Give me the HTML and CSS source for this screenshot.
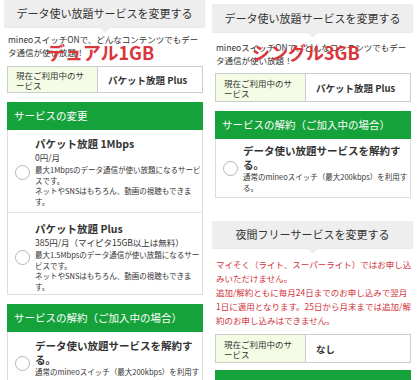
FILE: index.html
```html
<!DOCTYPE html>
<html lang="ja">

<head>
    <meta charset="utf-8">
    <meta name="viewport" content="width=device-width, initial-scale=1.0">
    <title>データ使い放題サービス</title>
    <link rel="stylesheet" href="styles.css">
</head>

<body>
    <div class="screens">

        <!-- venstre: dual -->
        <section class="pane pane-dual">
            <p class="stamp">デュアル1GB</p>
            <h2 class="balloon">データ使い放題サービスを変更する</h2>
            <p class="lead">mineoスイッチONで、どんなコンテンツでもデー<br>タ通信が使い放題！</p>
            <table class="current">
                <tr>
                    <th>現在ご利用中のサービス</th>
                    <td>パケット放題 Plus</td>
                </tr>
            </table>

            <div class="box">
                <h3 class="box-title">サービスの変更</h3>
                <div class="option">
                    <span class="radio"></span>
                    <div class="option-text">
                        <p class="option-name">パケット放題 1Mbps</p>
                        <p class="price">0円/月</p>
                        <p class="note">最大1Mbpsのデータ通信が使い放題になるサービ<br>スです。<br>ネットやSNSはもちろん、動画の視聴もできま<br>す。</p>
                    </div>
                </div>
                <div class="option">
                    <span class="radio"></span>
                    <div class="option-text">
                        <p class="option-name">パケット放題 Plus</p>
                        <p class="price">385円/月（マイピタ15GB以上は無料）</p>
                        <p class="note">最大1.5Mbpsのデータ通信が使い放題になるサー<br>ビスです。<br>ネットやSNSはもちろん、動画の視聴もできま<br>す。</p>
                    </div>
                </div>
            </div>

            <div class="box">
                <h3 class="box-title">サービスの解約（ご加入中の場合）</h3>
                <div class="option">
                    <span class="radio"></span>
                    <div class="option-text">
                        <p class="option-name">データ使い放題サービスを解約す<br>る。</p>
                        <p class="note">通常のmineoスイッチ（最大200kbps）を利用す<br>る。</p>
                    </div>
                </div>
            </div>
        </section>

        <!-- hoejre: single -->
        <section class="pane pane-single">
            <p class="stamp">シングル3GB</p>
            <h2 class="balloon">データ使い放題サービスを変更する</h2>
            <p class="lead">mineoスイッチONで、どんなコンテンツでもデー<br>タ通信が使い放題！</p>
            <table class="current">
                <tr>
                    <th>現在ご利用中のサービス</th>
                    <td>パケット放題 Plus</td>
                </tr>
            </table>

            <div class="box">
                <h3 class="box-title">サービスの解約（ご加入中の場合）</h3>
                <div class="option">
                    <span class="radio"></span>
                    <div class="option-text">
                        <p class="option-name">データ使い放題サービスを解約す<br>る。</p>
                        <p class="note">通常のmineoスイッチ（最大200kbps）を利用す<br>る。</p>
                    </div>
                </div>
            </div>

            <h2 class="balloon night">夜間フリーサービスを変更する</h2>
            <p class="warning">マイそく（ライト、スーパーライト）ではお申し込<br>みいただけません。<br>追加/解約ともに毎月24日までのお申し込みで翌月<br>1日に適用となります。25日から月末までは追加/解<br>約のお申し込みはできません。</p>
            <table class="current">
                <tr>
                    <th>現在ご利用中のサービス</th>
                    <td>なし</td>
                </tr>
            </table>

            <div class="box">
                <div class="box-title"></div>
            </div>
        </section>

    </div>
</body>

</html>
```

FILE: styles.css
```css
html,
body {
    margin: 0;
    padding: 0;
    height: 380px;
    overflow: hidden;
    background-color: white;
}

body {
    font-family: "Noto Sans CJK JP", "Noto Sans", sans-serif;
    color: #333;
}

p {
    margin: 0;
}

.screens {
    display: flex;
    gap: 4px;
}

.pane {
    position: relative;
    width: 196px;
    padding: 0 4px 0 7px;
}

.pane-single {
    padding: 4px 8px 0 4px;
}

/**************** Stempel **************/

.stamp {
    position: absolute;
    left: 47px;
    top: 42px;
    z-index: 2;
    color: #da363b;
    font-size: 18px;
    font-weight: 700;
    line-height: 20px;
}

.pane-single .stamp {
    left: 41px;
    top: 42px;
}

/**************** Overskrift **************/

.balloon {
    position: relative;
    margin: 0 -2px 0 -3px;
    height: 27px;
    background-color: #eeeeee;
    box-shadow: 0 1px 1px rgba(0, 0, 0, 0.08);
    font-size: 11px;
    font-weight: normal;
    line-height: 27px;
    text-align: center;
}

.balloon::after {
    content: "";
    position: absolute;
    left: 50%;
    bottom: -6px;
    margin-left: -6px;
    border: 6px solid transparent;
    border-bottom: 0;
    border-top-color: #eeeeee;
}

.pane-single .balloon {
    height: 28px;
    line-height: 28px;
}

.pane-single .balloon.night {
    margin-top: 23px;
    height: 27px;
    line-height: 27px;
}

.lead {
    margin: 6px 0 0 1px;
    font-size: 8.5px;
    line-height: 13px;
}

.pane-single .lead {
    margin-top: 9px;
    line-height: 12.5px;
}

.warning {
    margin: 9px -2px 0 1px;
    color: #d0343b;
    font-size: 8.5px;
    line-height: 14px;
    white-space: nowrap;
}

/**************** Tabel **************/

.current {
    width: 100%;
    height: 27px;
    margin-top: 7px;
    border-collapse: collapse;
    border: 1px solid #cccccc;
}

.pane-single .current {
    height: 29px;
}

.current th {
    width: 74px;
    padding: 2px 7px 2px 8px;
    border-right: 1px solid #cccccc;
    background-color: #f4fce6;
    font-size: 8.5px;
    font-weight: normal;
    line-height: 10px;
    text-align: left;
}

.current td {
    padding: 0 10px;
    font-size: 9.5px;
    font-weight: 700;
}

/**************** Bokse **************/

.box {
    margin-top: 9px;
    border: 1px solid #dddddd;
    border-top: 0;
}

.box-title {
    margin: 0 -1px;
    height: 28px;
    padding-left: 7px;
    background-color: #16a23a;
    color: white;
    font-size: 10.5px;
    font-weight: normal;
    line-height: 28px;
}

.option {
    display: flex;
    align-items: center;
    padding: 7px 0 5px 7px;
}

.option + .option {
    border-top: 1px solid #e6e6e6;
    padding-top: 9px;
    padding-bottom: 2px;
}

.pane-single .option {
    padding-top: 5px;
    padding-bottom: 4px;
}

.option-text {
    white-space: nowrap;
}

.radio {
    flex: none;
    width: 13px;
    height: 13px;
    margin-right: 5px;
    border: 1px solid #b5b5b5;
    border-radius: 50%;
}

.option-name {
    font-size: 10.5px;
    font-weight: 700;
    line-height: 13px;
}

.option-text .option-name:first-child {
    line-height: 14px;
}

.price {
    margin-bottom: 1px;
    font-size: 8.5px;
    line-height: 13px;
}

.note {
    font-size: 7.5px;
    line-height: 10.5px;
}

.pane-single .box {
    margin-top: 9px;
}

.pane-single .box:last-child {
    margin-top: 7px;
}
```
